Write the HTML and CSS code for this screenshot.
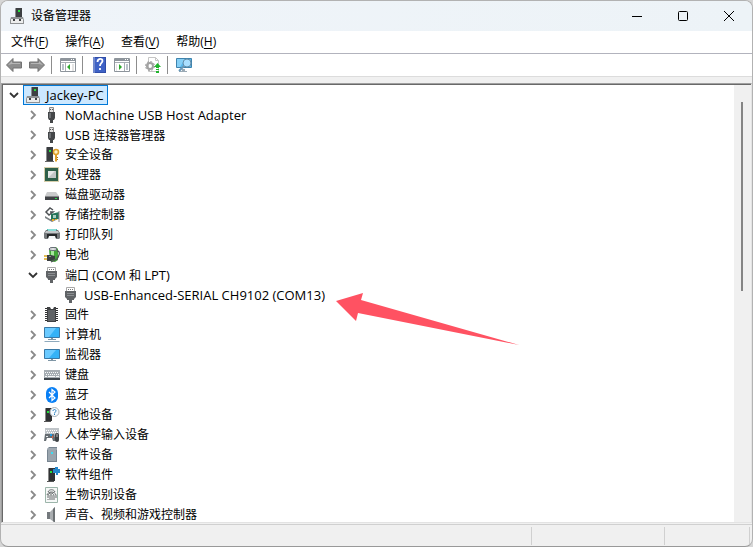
FILE: index.html
```html
<!DOCTYPE html>
<html lang="zh-CN">
<head>
    <meta charset="UTF-8">
    <title>设备管理器</title>
    <link rel="stylesheet" href="styles.css">
</head>
<body>

    <!-- shared icons -->
    <svg class="sprite" aria-hidden="true">
        <symbol id="i-pc" viewBox="0 0 16 16">
            <path d="M6 1l1-1h6v10H6z" fill="#3c3f42"/><path d="M6 1h1v9H6z" fill="#8a8c8e"/>
            <path d="M9 2h2v2H9z" fill="#25e03c"/>
            <path d="M2 9h12l1 3v4H1v-4z" fill="#8f9294"/><path d="M2 11h12v4H2z" fill="#eceded"/>
            <path d="M4 11h2v2H4zM10 11h2v2h-2z" fill="#3f4143"/>
        </symbol>
        <symbol id="i-usb" viewBox="0 0 16 16">
            <path d="M5.5 .5h4v5h-4z" fill="#e2e2e2" stroke="#8b8b8b"/><path d="M6 2h1v1H6zM8 2h1v1H8z" fill="#555"/>
            <path d="M4 5h7v6l-1 2H9v3H6v-3H5l-1-2z" fill="#444749"/><path d="M5 6h2v5H5z" fill="#6d7073"/>
        </symbol>
        <symbol id="i-port" viewBox="0 0 16 16">
            <path d="M3.5 .5h8v4h-8z" fill="#fff" stroke="#a8a8a8"/><path d="M5 2h1v1H5zM7 2h1v1H7zM9 2h1v1H9z" fill="#777"/>
            <path d="M2 4h11v6l-2 2v1H9v3H6v-3H4v-1l-2-2z" fill="#606366"/><path d="M4 6h7v1H4zM4 8h7v1H4z" fill="#8b8e91"/>
        </symbol>
        <symbol id="i-open" viewBox="0 0 10 10"><path d="M1 3l4 4 4-4" fill="none" stroke="#333" stroke-width="1.8"/></symbol>
        <symbol id="i-close" viewBox="0 0 10 10"><path d="M3 1l4 4-4 4" fill="none" stroke="#8a8a8a" stroke-width="1.8"/></symbol>
    </svg>

    <div class="window">
        <header class="titlebar">
            <svg class="icon"><use href="#i-pc"/></svg>
            <h1 class="title">设备管理器</h1>
            <div class="controls">
                <button type="button" aria-label="最小化"><svg viewBox="0 0 12 12"><path d="M1 6.500h10"/></svg></button>
                <button type="button" aria-label="最大化"><svg viewBox="0 0 12 12"><rect x="1.5" y="1.5" width="9" height="9" rx="1"/></svg></button>
                <button type="button" aria-label="关闭"><svg viewBox="0 0 12 12"><path d="M1 1l10 10M11 1L1 11"/></svg></button>
            </div>
        </header>

        <nav class="menubar">
            <button type="button">文件(<u>F</u>)</button>
            <button type="button">操作(<u>A</u>)</button>
            <button type="button">查看(<u>V</u>)</button>
            <button type="button">帮助(<u>H</u>)</button>
        </nav>

        <div class="toolbar">
            <button type="button" aria-label="后退"><svg class="icon" viewBox="0 0 16 16"><path d="M.5 8L7 1.500V5h8.500v6H7v3.500z" fill="#8d8d8d" stroke="#737373"/><path d="M2 8l4-4v2h8v1H6z" fill="#b5b5b5"/></svg></button>
            <button type="button" aria-label="前进"><svg class="icon" viewBox="0 0 16 16"><path d="M15.500 8L9 1.500V5H.5v6H9v3.500z" fill="#8d8d8d" stroke="#737373"/><path d="M14 8l-4-4v2H2v1h8z" fill="#b5b5b5"/></svg></button>
            <span class="sep"></span>
            <button type="button" aria-label="显示控制台树">
                <svg class="icon" viewBox="0 0 16 16"><path d="M.5 1.500h15v13H.5z" fill="#fff" stroke="#8d949b"/><path d="M1 2h14v2H1z" fill="#8d949b"/><path d="M11 2h1v1h-1zM13 2h1v1h-1z" fill="#fff"/><path d="M1 5.500h14M5.500 6v8" stroke="#a7adb3"/><path d="M2 8h2M2 10h2M2 12h2" stroke="#778697"/><path d="M7 10l3-3v6z" fill="#2da82d"/><path d="M12 7h2v7h-2z" fill="#e4e4e4"/></svg>
            </button>
            <span class="sep"></span>
            <button type="button" aria-label="帮助">
                <svg class="icon" viewBox="0 0 16 16"><path d="M2 0h13v16H2z" fill="#304da8"/><path d="M2 0h2v16H2z" fill="#7188cc"/><path d="M4 1h10v14H4z" fill="#3f62c6"/><path d="M6.500 5c0-4 5-4 5-1 0 2-2.500 2-2.500 5M9 11v2" fill="none" stroke="#fff" stroke-width="1.8"/></svg>
            </button>
            <button type="button" aria-label="显示操作窗格">
                <svg class="icon" viewBox="0 0 16 16"><path d="M.5 1.500h15v13H.5z" fill="#fff" stroke="#8d949b"/><path d="M1 2h14v2H1z" fill="#8d949b"/><path d="M11 2h1v1h-1zM13 2h1v1h-1z" fill="#fff"/><path d="M1 5.500h14M10.500 6v8" stroke="#a7adb3"/><path d="M12 8h2M12 10h2M12 12h2" stroke="#778697"/><path d="M8 10L5 7v6z" fill="#2da82d"/><path d="M2 7h1v7H2z" fill="#e4e4e4"/></svg>
            </button>
            <span class="sep"></span>
            <button type="button" aria-label="更新驱动程序">
                <svg class="icon" viewBox="0 0 16 16"><path d="M3.500 .5h7l3 3v11h-10z" fill="#fff" stroke="#c5c5c5"/><path d="M10.500 .5v3h3" fill="none" stroke="#c5c5c5"/><circle cx="5" cy="9" r="3" fill="none" stroke="#a2a2a2" stroke-width="2"/><circle cx="5" cy="9" r="4.500" fill="none" stroke="#a2a2a2" stroke-dasharray="2 1.5"/><path d="M12.500 6L16 10h-2v1h-3v-1H9zM11 12h3v1h-3zM11 14h3v2h-3z" fill="#21b52d"/></svg>
            </button>
            <span class="sep"></span>
            <button type="button" aria-label="扫描检测硬件改动">
                <svg class="icon" viewBox="0 0 16 16"><path d="M.5 1.500h15v9H.5z" fill="#55b6ec" stroke="#3f83ad"/><path d="M1 2h8L4 10H1z" fill="#85d0f7"/><path d="M6 12h3v2H6zM3 14h8v1H3z" fill="#9baab5"/><circle cx="11" cy="6" r="4" fill="#a9dfff" stroke="#648ea9"/><path d="M8 9l-5 5" stroke="#6798b8" stroke-width="2"/></svg>
            </button>
        </div>

        <main class="pane">
            <ul class="tree">
                <li>
                    <div class="row">
                        <button class="toggle" type="button" aria-label="折叠"><svg><use href="#i-open"/></svg></button>
                        <span class="node selected"><svg class="icon"><use href="#i-pc"/></svg><span class="en">Jackey-PC</span></span>
                    </div>
                    <ul>
                        <li><div class="row">
                            <button class="toggle" type="button" aria-label="展开"><svg><use href="#i-close"/></svg></button>
                            <span class="node"><svg class="icon"><use href="#i-usb"/></svg><span class="en">NoMachine USB Host Adapter</span></span>
                        </div></li>
                        <li><div class="row">
                            <button class="toggle" type="button" aria-label="展开"><svg><use href="#i-close"/></svg></button>
                            <span class="node"><svg class="icon"><use href="#i-usb"/></svg><span><span class="en">USB</span> 连接器管理器</span></span>
                        </div></li>
                        <li><div class="row">
                            <button class="toggle" type="button" aria-label="展开"><svg><use href="#i-close"/></svg></button>
                            <span class="node">
                                <svg class="icon" viewBox="0 0 16 16"><path d="M2 1l1-1h6v14H2z" fill="#393c3f"/><path d="M2 1h1v13H2z" fill="#8a8c8e"/><path d="M5 3h2v2H5z" fill="#25e03c"/><path d="M1 14h9v1H1z" fill="#666"/><circle cx="12" cy="5" r="2.5" fill="#fff3c4" stroke="#dfa12c" stroke-width="1.6"/><path d="M11 8h2v6l-1 1-1-1z" fill="#dfa12c"/><path d="M13 10h1v1h-1zM13 12h1v1h-1z" fill="#a66e12"/></svg>安全设备</span>
                        </div></li>
                        <li><div class="row">
                            <button class="toggle" type="button" aria-label="展开"><svg><use href="#i-close"/></svg></button>
                            <span class="node">
                                <svg class="icon" viewBox="0 0 16 16"><path d="M.5 .5h14v14H.5z" fill="none" stroke="#ad9c56" stroke-dasharray="1 1"/><path d="M1 1h13v13H1z" fill="#2f6049"/><path d="M4 4h8v7H4z" fill="#c3c7c6"/><path d="M4 4h7l-7 7z" fill="#e6e8e7"/></svg>处理器</span>
                        </div></li>
                        <li><div class="row">
                            <button class="toggle" type="button" aria-label="展开"><svg><use href="#i-close"/></svg></button>
                            <span class="node">
                                <svg class="icon" viewBox="0 0 16 16"><path d="M3 5h9l3 4H1z" fill="#c9cacb"/><path d="M1 9h14v4H1z" fill="#404346"/><path d="M1 9h14v1H1z" fill="#858789"/><path d="M11 11h2v1h-2z" fill="#26dd45"/></svg>磁盘驱动器</span>
                        </div></li>
                        <li><div class="row">
                            <button class="toggle" type="button" aria-label="展开"><svg><use href="#i-close"/></svg></button>
                            <span class="node">
                                <svg class="icon" viewBox="0 0 16 16"><path d="M9 3L6 1 2 5l3 3 4-3H6" fill="none" stroke="#4f5356" stroke-width="1.5"/><path d="M1 9l5 3h4l2 1-4 2-7-4z" fill="#7b8083"/><path d="M7 7l8-2v7l-8 1z" fill="#26755a"/><path d="M9 8h3v3H9z" fill="#abcfc2"/><path d="M8 12h2v2H8zM11 12h2v1h-2z" fill="#e9ad26"/><path d="M15 4v11" stroke="#888"/></svg>存储控制器</span>
                        </div></li>
                        <li><div class="row">
                            <button class="toggle" type="button" aria-label="展开"><svg><use href="#i-close"/></svg></button>
                            <span class="node">
                                <svg class="icon" viewBox="0 0 16 16"><path d="M3 2h10v3H3z" fill="#58c2bb"/><path d="M2 3h12l2 3v5l-1 1H1l-1-1V6z" fill="#74787b"/><path d="M2 4h12l1 2H1z" fill="#c3c6c8"/><path d="M4 2h8v2H4z" fill="#8bdcd6"/><path d="M3 7h10v4H3z" fill="#25282a"/><path d="M5 9h6l1 3H4z" fill="#f4f6f7"/></svg>打印队列</span>
                        </div></li>
                        <li><div class="row">
                            <button class="toggle" type="button" aria-label="展开"><svg><use href="#i-close"/></svg></button>
                            <span class="node">
                                <svg class="icon" viewBox="0 0 16 16"><path d="M5 2l3-2h4l2 2v11l-3 2-5-1z" fill="#42a638"/><path d="M7 3h3v9H7z" fill="#a6e69d"/><ellipse cx="9" cy="2" rx="4" ry="1.5" fill="#e4e8e6" stroke="#667"/><path d="M13 4c4 0 2 5 0 8l-6 3" fill="none" stroke="#4e5254" stroke-width="1.3"/><path d="M0 9h4M0 12h4" stroke="#dca91f" stroke-width="1.5"/><path d="M3 8h4l4 1v3l-4 2H3z" fill="#3b3f42"/><path d="M5 9h2v1H5z" fill="#888"/></svg>电池</span>
                        </div></li>
                        <li>
                            <div class="row">
                                <button class="toggle" type="button" aria-label="折叠"><svg><use href="#i-open"/></svg></button>
                                <span class="node"><svg class="icon"><use href="#i-port"/></svg><span>端口 <span class="en">(COM</span> 和 <span class="en">LPT)</span></span></span>
                            </div>
                            <ul>
                                <li><div class="row leaf">
                                    <span class="node"><svg class="icon"><use href="#i-port"/></svg><span class="en">USB-Enhanced-SERIAL CH9102 (COM13)</span></span>
                                </div></li>
                            </ul>
                        </li>
                        <li><div class="row">
                            <button class="toggle" type="button" aria-label="展开"><svg><use href="#i-close"/></svg></button>
                            <span class="node">
                                <svg class="icon" viewBox="0 0 16 16"><path d="M2.500 1v14M12.500 1v14" stroke="#333" stroke-width="3" stroke-dasharray="1 1"/><path d="M3 0h3l1 2h2l1-2h2v15H3z" fill="#3f4143"/><path d="M4 3h7v11H4z" fill="#606366"/></svg>固件</span>
                        </div></li>
                        <li><div class="row">
                            <button class="toggle" type="button" aria-label="展开"><svg><use href="#i-close"/></svg></button>
                            <span class="node">
                                <svg class="icon" viewBox="0 0 16 16"><path d="M.5 .5h15v10H.5z" fill="#34b2f7" stroke="#3979a6"/><path d="M1 1h11L5 10H1z" fill="#6bcaff"/><path d="M7 11h2v1H7zM4 12h8v1H4z" fill="#7f96a5"/><path d="M1 14h14l1 1H0z" fill="#8faabd"/></svg>计算机</span>
                        </div></li>
                        <li><div class="row">
                            <button class="toggle" type="button" aria-label="展开"><svg><use href="#i-close"/></svg></button>
                            <span class="node">
                                <svg class="icon" viewBox="0 0 16 16"><path d="M.5 2.500h15v9H.5z" fill="#34b2f7" stroke="#3979a6"/><path d="M1 3h11l-7 8H1z" fill="#6bcaff"/><path d="M7 12h2v1H7zM4 13h8v1H4z" fill="#7f96a5"/></svg>监视器</span>
                        </div></li>
                        <li><div class="row">
                            <button class="toggle" type="button" aria-label="展开"><svg><use href="#i-close"/></svg></button>
                            <span class="node">
                                <svg class="icon" viewBox="0 0 16 16"><path d="M0 3h16v8H0z" fill="#a6adb3"/><path d="M0 11h16v2H0z" fill="#3e454b"/><path d="M1 5.500h14M2 7.500h13" stroke="#f7f9fa" stroke-dasharray="1 1"/><path d="M1 9.500h2m1 0h7m1 0h3" stroke="#f7f9fa"/></svg>键盘</span>
                        </div></li>
                        <li><div class="row">
                            <button class="toggle" type="button" aria-label="展开"><svg><use href="#i-close"/></svg></button>
                            <span class="node">
                                <svg class="icon" viewBox="0 0 16 16"><rect x="2" width="12" height="16" rx="6" fill="#087ff5"/><path d="M5 5l6 6-3 2.500v-11L11 5l-6 6" fill="none" stroke="#fff" stroke-width="1.2"/></svg>蓝牙</span>
                        </div></li>
                        <li><div class="row">
                            <button class="toggle" type="button" aria-label="展开"><svg><use href="#i-close"/></svg></button>
                            <span class="node">
                                <svg class="icon" viewBox="0 0 16 16"><path d="M1 2l1-1h6v13H1z" fill="#303234"/><path d="M1 2h1v12H1z" fill="#888"/><path d="M3 4h2v2H3z" fill="#25e03c"/><path d="M0 14h7v1H0z" fill="#555"/><circle cx="10.500" cy="5" r="4.500" fill="#f6fbff" stroke="#a7afb5"/><path d="M9 4c0-2 3-2 3 0 0 1-1.500 1-1.500 2.500M10.500 7v1" fill="none" stroke="#297fbe"/></svg>其他设备</span>
                        </div></li>
                        <li><div class="row">
                            <button class="toggle" type="button" aria-label="展开"><svg><use href="#i-close"/></svg></button>
                            <span class="node">
                                <svg class="icon" viewBox="0 0 16 16"><path d="M1 1h14v8H1z" fill="#bfc4c8"/><path d="M2 3.500h12M3 5.500h11" stroke="#fff" stroke-dasharray="1 1"/><path d="M1 7h9l2 7H9l-1-3H3l-1 3H0z" fill="#656c71"/><path d="M2 9h2v1H2z" fill="#e6e9eb"/><path d="M6 7h2v2H6z" fill="#259be2"/><path d="M8 9h1v2H8z" fill="#e46042"/><rect x="11" y="6" width="4" height="9" rx="2" fill="#3e4245"/><path d="M13 7v3" stroke="#bbb"/></svg>人体学输入设备</span>
                        </div></li>
                        <li><div class="row">
                            <button class="toggle" type="button" aria-label="展开"><svg><use href="#i-close"/></svg></button>
                            <span class="node">
                                <svg class="icon" viewBox="0 0 16 16"><path d="M3 2l2-2h8v15H3z" fill="#788591"/><path d="M4 3h8v11H4z" fill="#9aa5ae"/><path d="M3 2h10" stroke="#c5cbd0"/><path d="M7 5h2v2H7z" fill="#3cdef4"/></svg>软件设备</span>
                        </div></li>
                        <li><div class="row">
                            <button class="toggle" type="button" aria-label="展开"><svg><use href="#i-close"/></svg></button>
                            <span class="node">
                                <svg class="icon" viewBox="0 0 16 16"><path d="M4 2l1-1h6v13H4z" fill="#303234"/><path d="M4 2h1v12H4z" fill="#888"/><path d="M6 4h2v2H6z" fill="#25e03c"/><path d="M3 14h7v1H3z" fill="#555"/><path d="M9 2h2V0h3v2h2v4h-2v2h-2V6H9z" fill="#2688cb"/></svg>软件组件</span>
                        </div></li>
                        <li><div class="row">
                            <button class="toggle" type="button" aria-label="展开"><svg><use href="#i-close"/></svg></button>
                            <span class="node">
                                <svg class="icon" viewBox="0 0 16 16"><path d="M1.500 .5h12v15h-12z" fill="#f6f8f7" stroke="#9cb5aa"/><path d="M4 5c1-3 6-3 7 0M3 8c1-4 8-4 9 0v3M4 11V9c0-4 6-4 6 0v4M6 13V9c0-2 2-2 2 0v4M4 12v1" fill="none" stroke="#55595b" stroke-width=".9"/></svg>生物识别设备</span>
                        </div></li>
                        <li><div class="row">
                            <button class="toggle" type="button" aria-label="展开"><svg><use href="#i-close"/></svg></button>
                            <span class="node">
                                <svg class="icon" viewBox="0 0 16 16"><path d="M3 5h3v7H3z" fill="#74797d"/><path d="M6 5l5-5v16l-5-4z" fill="#a9adb0"/><path d="M9 2l2-2v16l-2-2z" fill="#6c7174"/></svg>声音、视频和游戏控制器</span>
                        </div></li>
                    </ul>
                </li>
            </ul>
            <div class="scrollbar"><div class="thumb"></div></div>
            <svg class="arrow" viewBox="0 0 184 53" aria-hidden="true"><path d="M0 8L27 0l-2 7 158 45L22 20l-2 8z" fill="#ff5262"/></svg>
        </main>

        <footer class="statusbar">
            <span class="cell"></span>
            <span class="cell"></span>
            <span class="cell"></span>
        </footer>
    </div>

</body>
</html>
```
FILE: styles.css
```css
*{
    box-sizing: border-box;
    margin: 0;
    padding: 0;
}
body{
    height: 100vh;
    background-color: #d6d6d6;
    font: 12px/14px "Open Sans", "Noto Sans CJK SC", sans-serif;
    color: #000;
}
ul{
    list-style: none;
}
button{
    border: 0;
    background: none;
    font: inherit;
    color: inherit;
}
.sprite{
    display: none;
}
.icon{
    display: block;
    flex: none;
    width: 16px;
    height: 16px;
}
.window{
    display: flex;
    flex-direction: column;
    height: 100%;
    border: 1px solid #b2b2b2;
    border-bottom-color: #999;
    border-radius: 8px;
    background-color: #f0f0f0;
    overflow: hidden;
}

/* title */
.titlebar{
    display: flex;
    align-items: center;
    height: 30px;
    padding-left: 8px;
    background: linear-gradient(90deg, #eff4f9, #edf3f7);
}
.title{
    flex: 1;
    padding-left: 6px;
    font-size: 12px;
    font-weight: normal;
}
.controls{
    display: flex;
}
.controls button{
    display: flex;
    align-items: center;
    justify-content: center;
    width: 46px;
    height: 30px;
}
.controls svg{
    width: 12px;
    height: 12px;
    fill: none;
    stroke: #000;
}

/* menu */
.menubar{
    display: flex;
    gap: 17px;
    height: 23px;
    padding-left: 10px;
    border-bottom: 1px solid #b2b3bd;
    background-color: #fff;
}
.menubar u{
    text-underline-offset: 2px;
}

/* toolbar */
.toolbar{
    display: flex;
    align-items: center;
    gap: 7px;
    height: 23px;
    padding-left: 5px;
    border-bottom: 1px solid #dcdcdc;
    background-color: #fff;
}
.sep{
    width: 1px;
    height: 18px;
    margin: 0 1px 0 -1px;
    background-color: #8d8d8d;
}

/* device tree */
.pane{
    position: relative;
    display: flex;
    flex: 1;
    min-height: 0;
    margin: 6px 0 1px;
    padding: 1px 0 0 1px;
    border: 1px solid #e3e3e3;
    border-top-color: #a0a0a0;
    border-left-color: #a0a0a0;
    background-color: #fff;
    box-shadow: inset 1px 1px #696969;
}
.tree{
    flex: 1;
    overflow: hidden;
    white-space: nowrap;
}
.tree ul{
    padding-left: 19px;
}
.row{
    display: flex;
    align-items: center;
    height: 20px;
}
.leaf{
    padding-left: 20px;
}
.toggle{
    display: flex;
    align-items: center;
    justify-content: center;
    width: 20px;
    height: 20px;
    padding-left: 2px;
}
.toggle svg{
    width: 10px;
    height: 10px;
}
.node{
    display: flex;
    align-items: center;
    gap: 5px;
    height: 20px;
    padding: 0 3px 0 1px;
    border: 1px solid transparent;
}
.en{
    font-size: 13px;
}
.selected{
    border-color: #0078d7;
    background-color: #cce8ff;
}
.scrollbar{
    width: 17px;
    padding: 17px 0 0 7px;
    background-color: #f0f0f0;
}
.thumb{
    width: 2px;
    height: 45%;
    background-color: #858585;
}
.arrow{
    position: absolute;
    left: 334px;
    top: 209px;
    width: 184px;
    height: 53px;
}

/* status */
.statusbar{
    display: flex;
    height: 22px;
    padding: 2px 2px 1px 0;
    border-top: 1px solid #d0d0d0;
}
.cell{
    border-right: 1px solid #d0d0d0;
}
.cell:nth-child(1){
    flex: 1;
}
.cell:nth-child(2){
    width: 133px;
}
.cell:nth-child(3){
    width: 85px;
}
```
